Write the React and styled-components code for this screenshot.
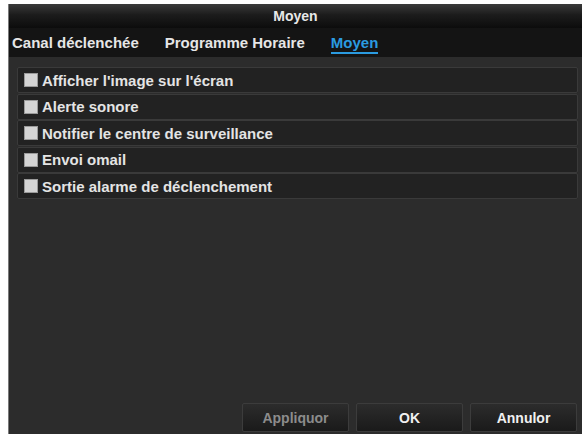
import React from 'react';
import styled, { createGlobalStyle } from 'styled-components';

const GlobalStyle = createGlobalStyle`
  html, body {
    margin: 0;
    padding: 0;
    background: #ffffff;
    font-family: "Liberation Sans", Arial, sans-serif;
  }
`;

const Screen = styled.div`
  width: 582px;
  height: 434px;
  padding: 4px 0 0 8px;
  box-sizing: border-box;
  display: flex;
  flex-direction: column;
  overflow: hidden;
`;

const Panel = styled.div`
  flex: 1;
  display: flex;
  flex-direction: column;
  border-left: 1px solid #7a7a7a;
`;

const TitleBar = styled.div`
  height: 24px;
  display: flex;
  align-items: center;
  justify-content: center;
  background: linear-gradient(#3a3a3a 0%, #1c1c1c 45%, #0c0c0c 100%);
  color: #e8e8e8;
  font-size: 14px;
  font-weight: bold;
`;

const TabBar = styled.div`
  height: 29px;
  display: flex;
  align-items: center;
  gap: 26px;
  padding-left: 3px;
  background: #141414;
`;

const Tab = styled.div`
  font-size: 15px;
  font-weight: bold;
  color: ${p => (p.active ? '#2b9be0' : '#e6e6e6')};
  padding-bottom: 1px;
  border-bottom: 2px solid ${p => (p.active ? '#2b9be0' : 'transparent')};
  margin-top: 3px;
`;

const Body = styled.div`
  flex: 1;
  background: #2c2c2c;
  padding: 10px 4px 0 8px;
  display: flex;
  flex-direction: column;
`;

const List = styled.div`
  display: flex;
  flex-direction: column;
  gap: 0.5px;
`;

const Row = styled.div`
  height: 26px;
  box-sizing: border-box;
  display: flex;
  align-items: center;
  gap: 4px;
  padding-left: 6px;
  background: #222222;
  border: 1px solid #3a3a3a;
  border-radius: 2px;
  color: #e4e4e4;
  font-size: 15px;
  font-weight: bold;
`;

const Check = styled.span`
  width: 14px;
  height: 14px;
  flex: none;
  background: #d4d4d4;
  border: 1px solid #9a9a9a;
  box-sizing: border-box;
`;

const Footer = styled.div`
  margin-top: auto;
  display: flex;
  justify-content: flex-end;
  gap: 7px;
  padding: 0 1px 2px 0;
`;

const Button = styled.div`
  width: 107px;
  height: 29px;
  display: flex;
  align-items: center;
  justify-content: center;
  box-sizing: border-box;
  border: 1px solid #3c3c3c;
  border-radius: 2px;
  background: linear-gradient(#2c2c2c, #1a1a1a);
  color: ${p => (p.disabled ? '#8c8c8c' : '#f0f0f0')};
  font-size: 14px;
  font-weight: bold;
`;

const options = [
  "Afficher l'image sur l'écran",
  'Alerte sonore',
  'Notifier le centre de surveillance',
  'Envoi omail',
  'Sortie alarme de déclenchement',
];

const App = () => (
  <>
    <GlobalStyle />
    <Screen>
      <Panel>
        <TitleBar>Moyen</TitleBar>
        <TabBar>
          <Tab>Canal déclenchée</Tab>
          <Tab>Programme Horaire</Tab>
          <Tab active>Moyen</Tab>
        </TabBar>
        <Body>
          <List>
            {options.map(label => (
              <Row key={label}>
                <Check />
                {label}
              </Row>
            ))}
          </List>
          <Footer>
            <Button disabled>Appliquor</Button>
            <Button>OK</Button>
            <Button>Annulor</Button>
          </Footer>
        </Body>
      </Panel>
    </Screen>
  </>
);

export default App;
